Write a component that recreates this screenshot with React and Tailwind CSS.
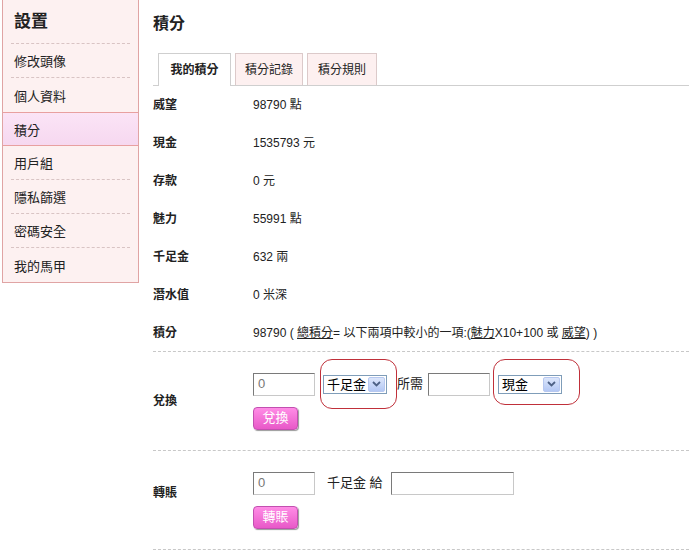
import React from "react";

const font = { fontFamily: '"Liberation Sans", "Noto Sans CJK TC", sans-serif' };

const menu = ["修改頭像", "個人資料", "積分", "用戶組", "隱私篩選", "密碼安全", "我的馬甲"];

const stats = [
  ["威望", "98790 點"],
  ["現金", "1535793 元"],
  ["存款", "0 元"],
  ["魅力", "55991 點"],
  ["千足金", "632 兩"],
  ["潛水值", "0 米深"],
];

// fake select box in old windows style
const FakeSelect = ({ label, width }) => (
  <div className={`flex h-[19px] items-center border border-[#7f9db9] bg-white pl-[3px] pr-[1px] ${width}`}>
    <span className="flex-1 text-[13px] leading-none text-black">{label}</span>
    <span className="flex h-[15px] w-[17px] items-center justify-center rounded-[2px] border border-[#b7c8f0] bg-gradient-to-b from-[#dce6fb] to-[#b4c8f4]">
      <svg width="9" height="6" viewBox="0 0 9 6">
        <path d="M1 1 L4.5 4.5 L8 1" fill="none" stroke="#4d6185" strokeWidth="1.8" />
      </svg>
    </span>
  </div>
);

const Circled = ({ children, box }) => (
  <div className="relative">
    {children}
    <div className={`pointer-events-none absolute rounded-[12px] border border-[#c0303a] ${box}`} />
  </div>
);

const PinkButton = ({ children }) => (
  <button className="h-[23px] w-[45px] rounded-[4px] border border-[#c24fb0] bg-gradient-to-b from-[#ff8ce6] to-[#e858c8] text-[13px] text-white shadow-[1px_1px_1px_#999]">
    {children}
  </button>
);

const TextBox = ({ value, width }) => (
  <div className={`flex h-[23px] items-center border border-t-[#7a7a7a] border-l-[#7a7a7a] border-r-[#c8c8c8] border-b-[#c8c8c8] bg-white pl-[4px] text-[13px] text-[#777] ${width}`}>
    {value}
  </div>
);

export default function App() {
  return (
    <div className="flex min-h-[551px] w-[689px] bg-white text-[12px] text-[#222]" style={font}>
      {/* sidebar */}
      <div className="ml-[2px] h-[283px] w-[137px] border-x border-b border-[#e0a4a4] bg-[#fdf1f1]">
        <div className="mx-[8px] flex h-[44px] items-center border-b border-dashed border-[#d9c4c4] pl-[3px] text-[17px] font-bold text-[#222]">
          設置
        </div>
        {menu.map((m, i) => {
          const active = m === "積分";
          const nextActive = menu[i + 1] === "積分";
          if (active) {
            return (
              <div
                key={m}
                className="flex h-[34px] items-center border-y border-[#e8a0a0] bg-gradient-to-b from-[#fbe4f6] to-[#f6d8f0] pl-[11px] pt-[3px] text-[13px]"
              >
                {m}
              </div>
            );
          }
          const last = i === menu.length - 1;
          return (
            <div key={m} className="mx-[8px]">
              <div
                className={`flex h-[34px] items-center pl-[3px] pt-[3px] text-[13px] ${
                  last || nextActive ? "" : "border-b border-dashed border-[#d9c4c4]"
                }`}
              >
                {m}
              </div>
            </div>
          );
        })}
      </div>

      {/* main */}
      <div className="ml-[14px] flex-1">
        <div className="pt-[14px] text-[16px] font-bold leading-[20px]">積分</div>

        <div className="mt-[19px] flex h-[33px] items-end border-b border-[#cfcfcf] pl-[5px]">
          <div className="flex h-[33px] w-[73px] items-center justify-center border-x border-t border-[#cfcfcf] bg-white text-[12px] font-bold -mb-px">
            我的積分
          </div>
          <div className="ml-[4px] flex h-[32px] w-[68px] items-center justify-center border-x border-t border-[#dccaca] bg-[#fdf0f0] text-[12px]">
            積分記錄
          </div>
          <div className="ml-[4px] flex h-[32px] w-[70px] items-center justify-center border-x border-t border-[#dccaca] bg-[#fdf0f0] text-[12px]">
            積分規則
          </div>
        </div>

        {stats.map(([k, v]) => (
          <div key={k} className="flex h-[38px] items-center">
            <div className="w-[100px] font-bold">{k}</div>
            <div>{v}</div>
          </div>
        ))}
        <div className="flex h-[38px] items-center border-b border-dashed border-[#c8c8c8]">
          <div className="w-[100px] font-bold">積分</div>
          <div>
            98790 ( <span className="underline">總積分</span>= 以下兩項中較小的一項:(
            <span className="underline">魅力</span>X10+100 或 <span className="underline">威望</span>) )
          </div>
        </div>

        {/* exchange */}
        <div className="flex h-[99px] items-center border-b border-dashed border-[#c8c8c8]">
          <div className="w-[100px] font-bold">兌換</div>
          <div className="flex flex-col gap-[11px]">
            <div className="flex items-center">
              <TextBox value="0" width="w-[62px]" />
              <div className="ml-[8px]">
                <Circled box="-left-[3px] -top-[16px] h-[50px] w-[77px]">
                  <FakeSelect label="千足金" width="w-[64px]" />
                </Circled>
              </div>
              <span className="ml-[10px] text-[13px]">所需</span>
              <div className="ml-[5px]">
                <TextBox value="" width="w-[62px]" />
              </div>
              <div className="ml-[8px]">
                <Circled box="-left-[5px] -top-[16px] h-[46px] w-[87px]">
                  <FakeSelect label="現金" width="w-[64px]" />
                </Circled>
              </div>
            </div>
            <PinkButton>兌換</PinkButton>
          </div>
        </div>

        {/* transfer */}
        <div className="flex h-[99px] items-center border-b border-dashed border-[#c8c8c8]">
          <div className="-mt-[15px] w-[100px] font-bold">轉賬</div>
          <div className="flex flex-col gap-[11px]">
            <div className="flex items-center">
              <TextBox value="0" width="w-[62px]" />
              <span className="ml-[12px] text-[13px]">千足金&nbsp;給</span>
              <div className="ml-[8px]">
                <TextBox value="" width="w-[123px]" />
              </div>
            </div>
            <PinkButton>轉賬</PinkButton>
          </div>
        </div>
      </div>
    </div>
  );
}
